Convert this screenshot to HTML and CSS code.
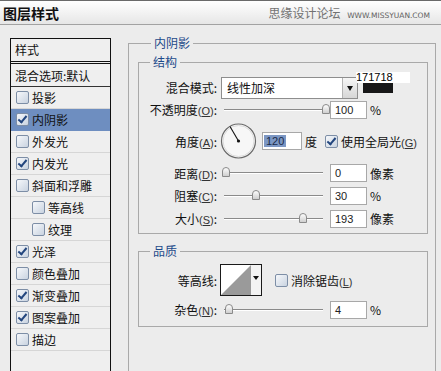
FILE: index.html
```html
<!DOCTYPE html>
<html lang="zh-CN">
<head>
<meta charset="UTF-8" />
<title>图层样式</title>
<link rel="stylesheet" href="styles.css">
</head>
<body>
<div class="titlebar">
  <span class="title">图层样式</span>
  <span class="site">思缘设计论坛 <small>WWW.MISSYUAN.COM</small></span>
</div>
<div class="main">
  <div class="style-list">
    <div class="list-head">样式</div>
    <div class="list-row blend">混合选项:默认</div>
    <div class="list-row"><span class="cb"></span>投影</div>
    <div class="list-row selected"><span class="cb checked"></span>内阴影</div>
    <div class="list-row"><span class="cb"></span>外发光</div>
    <div class="list-row"><span class="cb checked"></span>内发光</div>
    <div class="list-row"><span class="cb"></span>斜面和浮雕</div>
    <div class="list-row sub"><span class="cb"></span>等高线</div>
    <div class="list-row sub"><span class="cb"></span>纹理</div>
    <div class="list-row"><span class="cb checked"></span>光泽</div>
    <div class="list-row"><span class="cb"></span>颜色叠加</div>
    <div class="list-row"><span class="cb checked"></span>渐变叠加</div>
    <div class="list-row"><span class="cb checked"></span>图案叠加</div>
    <div class="list-row"><span class="cb"></span>描边</div>
  </div>

  <fieldset class="group outer">
    <legend>内阴影</legend>

    <fieldset class="group">
      <legend>结构</legend>
      <div class="row h23">
        <span class="lbl">混合模式:</span>
        <div class="select"><span class="sel-text">线性加深</span><span class="drop"></span></div>
        <div class="color-note"><span class="hex">171718</span><span class="swatch"></span></div>
      </div>
      <div class="row h21">
        <span class="lbl">不透明度<span class="key">(<u>O</u>)</span>:</span>
        <div class="slider"><span class="thumb" style="left:101px"></span></div>
        <span class="num">100</span><span class="unit">%</span>
      </div>
      <div class="row h42">
        <span class="lbl">角度<span class="key">(<u>A</u>)</span>:</span>
        <svg class="dial" width="38" height="38" viewBox="0 0 38 38">
          <circle cx="18.5" cy="19" r="17" fill="#f7f7f7" stroke="#6a6a6a" stroke-width="1.2"/>
          <circle cx="18.5" cy="19" r="15.5" fill="none" stroke="#dcdcdc" stroke-width="1"/>
          <line x1="18.5" y1="19" x2="10" y2="4.5" stroke="#111" stroke-width="1.1"/>
          <circle cx="18.5" cy="19" r="1.6" fill="#111"/>
        </svg>
        <span class="num wide"><span class="hl">120</span></span>
        <span class="unit">度</span>
        <span class="cb checked gap"></span><span class="cb-text">使用全局光<span class="key">(<u>G</u>)</span></span>
      </div>
      <div class="row h22">
        <span class="lbl">距离<span class="key">(<u>D</u>)</span>:</span>
        <div class="slider"><span class="thumb" style="left:1px"></span></div>
        <span class="num">0</span><span class="unit">像素</span>
      </div>
      <div class="row h23">
        <span class="lbl">阻塞<span class="key">(<u>C</u>)</span>:</span>
        <div class="slider"><span class="thumb" style="left:31px"></span></div>
        <span class="num">30</span><span class="unit">%</span>
      </div>
      <div class="row h23">
        <span class="lbl">大小<span class="key">(<u>S</u>)</span>:</span>
        <div class="slider"><span class="thumb" style="left:78px"></span></div>
        <span class="num">193</span><span class="unit">像素</span>
      </div>
    </fieldset>

    <fieldset class="group quality">
      <legend>品质</legend>
      <div class="row h32">
        <span class="lbl">等高线:</span>
        <div class="contour">
          <svg width="30" height="30" viewBox="0 0 30 30">
            <rect width="30" height="30" fill="#fff"/>
            <polygon points="0,30 30,0 30,30" fill="#9a9a9a"/>
          </svg>
          <span class="contour-drop"></span>
        </div>
        <span class="cb gap2"></span><span class="cb-text">消除锯齿<span class="key">(<u>L</u>)</span></span>
      </div>
      <div class="row h21 mt3">
        <span class="lbl">杂色<span class="key">(<u>N</u>)</span>:</span>
        <div class="slider"><span class="thumb" style="left:4px"></span></div>
        <span class="num">4</span><span class="unit">%</span>
      </div>
    </fieldset>
  </fieldset>
</div>
</body>
</html>
```

FILE: styles.css
```css
html, body { margin: 0; padding: 0; }
body { width: 441px; height: 371px; overflow: hidden; background: #ececec; color: #111; font-family: "Noto Sans CJK SC", "Liberation Sans", sans-serif; font-size: 12px; }

.titlebar { height: 25px; box-sizing: border-box; border-top: 1px solid #6a6a6a; border-bottom: 1px solid #a2a2a2; background: linear-gradient(#ffffff, #e6e6e6); display: flex; align-items: center; justify-content: space-between; padding: 0 11px 0 3px; }
.title { font-weight: bold; font-size: 14px; color: #111; }
.site { color: #727272; font-size: 12px; }
.site small { font-family: "DejaVu Sans", sans-serif; font-size: 7.5px; color: #606060; margin-left: 4px; }

.main { display: flex; align-items: flex-start; height: 346px; overflow: hidden; }

/* left list */
.style-list { margin: 13px 0 0 10px; width: 101px; height: 340px; box-sizing: border-box; border: 1px solid #111; border-bottom: none; background: #efefef; }
.list-head { height: 22px; line-height: 22px; padding-left: 4px; border-bottom: 3px double #111; }
.list-row { height: 21px; border-bottom: 1px solid #d6d6d6; display: flex; align-items: center; padding-left: 5px; }
.list-row.blend { height: 22px; padding-left: 4px; border-bottom-color: #333; }
.list-row.sub { padding-left: 21px; }
.list-row.selected { background: #6e8ec0; border-bottom-color: #6e8ec0; }
.list-row .cb { margin-right: 3px; }

/* checkbox */
.cb { display: inline-block; position: relative; width: 11px; height: 11px; border: 1px solid #7d8ea6; border-radius: 2px; background: linear-gradient(135deg, #f6f8fb, #c9d3e0); flex: none; }
.cb.checked::after { content: ""; position: absolute; left: 3px; top: 0; width: 3px; height: 7px; border-right: 2px solid #23467e; border-bottom: 2px solid #23467e; transform: rotate(40deg); }
.cb.gap { margin-left: 8px; }
.cb.gap2 { margin-left: 13px; }
.cb-text { margin-left: 3px; }

/* groups */
.group { margin: 0; border: 1px solid #a9a9a9; padding: 7px 0 3px 0; min-width: 0; }
.group legend { margin-left: 11px; padding: 0 3px; line-height: 14px; height: 14px; color: #1d4a8a; }
.group.outer { margin: 11px 0 0 17px; width: 308px; height: 360px; box-sizing: border-box; padding: 5px 7px 0 9px; }
.group.outer > legend { margin-left: 13px; }
.group.quality { margin-top: 10px; padding: 6px 0 6px 0; }

.row { display: flex; align-items: center; }
.h21 { height: 21px; }
.h22 { height: 22px; }
.h23 { height: 23px; }
.h32 { height: 32px; }
.h42 { height: 42px; }
.mt3 { margin-top: 3px; }
.lbl { width: 78px; text-align: right; margin-right: 3px; flex: none; white-space: nowrap; }
.key { font-family: "Liberation Sans", sans-serif; font-size: 11px; color: #333; }

/* select */
.select { width: 137px; height: 22px; box-sizing: border-box; border: 1px solid #8e8e8e; background: #fff; display: flex; align-items: center; margin-left: 1px; }
.sel-text { flex: 1; padding-left: 5px; }
.drop { width: 14px; height: 20px; border-left: 1px solid #b4b4b4; background: linear-gradient(#f6f6f6, #d6d6d6); position: relative; }
.drop::after { content: ""; position: absolute; left: 4px; top: 8px; border-left: 3.5px solid transparent; border-right: 3.5px solid transparent; border-top: 5px solid #111; }
.color-note { align-self: flex-start; margin: -4px 0 0 -2px; display: flex; flex-direction: column; }
.hex { width: 54px; height: 11px; line-height: 11px; background: #fff; font-family: "Liberation Sans", sans-serif; font-size: 11px; color: #000; }
.swatch { width: 30px; height: 10px; margin-left: 7px; background: #171718; }

/* slider */
.slider { position: relative; width: 108px; height: 14px; margin-left: 1px; flex: none; }
.slider::before { content: ""; position: absolute; left: 3px; right: 6px; top: 6px; height: 1px; border-top: 1px solid #8a8a8a; background: #fff; }
.thumb { position: absolute; top: 1px; width: 8px; height: 10px; box-sizing: border-box; border: 1px solid #8a8a8a; border-radius: 4px 4px 0 0; background: linear-gradient(#fdfdfd, #cfcfcf); }

.num { width: 37px; height: 18px; box-sizing: border-box; border: 1px solid #a8a8a8; background: #fff; font-family: "Liberation Sans", sans-serif; font-size: 11px; line-height: 16px; padding-left: 4px; margin-left: 1px; color: #222; flex: none; }
.num.wide { width: 40px; margin-left: 4px; padding-left: 1px; }
.hl { background: #7c97c4; color: #1a2a48; padding: 0 2px; }
.unit { margin-left: 3px; }

.dial { flex: none; }

/* contour */
.contour { width: 42px; height: 32px; box-sizing: border-box; border: 1px solid #1a1a1a; display: flex; background: #f3f3f3; flex: none; }
.contour svg { display: block; }
.contour-drop { flex: 1; position: relative; }
.contour-drop::after { content: ""; position: absolute; left: 2px; top: 11px; border-left: 3px solid transparent; border-right: 3px solid transparent; border-top: 4px solid #111; }
```
